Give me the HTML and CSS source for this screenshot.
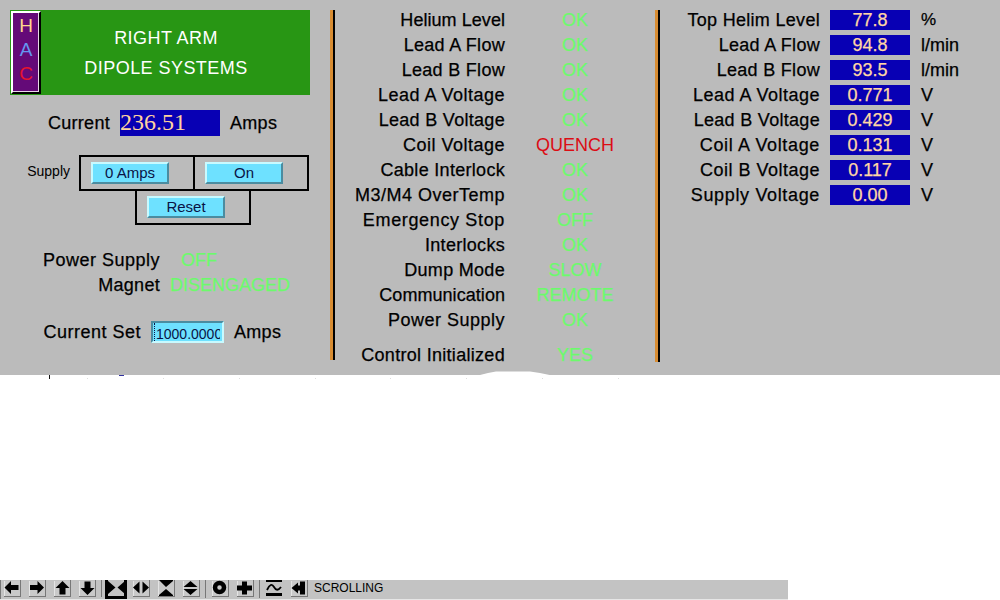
FILE: index.html
```
<!DOCTYPE html>
<html lang="en">

<head>
    <meta charset="UTF-8">
    <title>Right Arm Dipole Systems</title>
    <link rel="stylesheet" href="styles.css">
</head>

<body>
    <div class="console">
        <div class="left">
            <div class="header">
                <div class="hac">
                    <span class="h">H</span>
                    <span class="a">A</span>
                    <span class="c">C</span>
                </div>
                <div class="title">RIGHT ARM<br>DIPOLE SYSTEMS</div>
            </div>
            <div class="current">
                <span class="name">Current</span>
                <span class="readout">236.51</span>
                <span class="amps">Amps</span>
            </div>
            <div class="supply">
                <span class="supply-name">Supply</span>
                <div class="supply-box">
                    <div class="cell"><button>0 Amps</button></div>
                    <div class="cell cell-on"><button>On</button></div>
                </div>
            </div>
            <div class="reset-box"><button>Reset</button></div>
            <div class="state">
                <span class="name wide">Power Supply</span><span class="ok off">OFF</span>
                <span class="name">Magnet</span><span class="ok">DISENGAGED</span>
            </div>
            <div class="setpoint">
                <span class="name wide">Current Set</span>
                <div class="field"><span>1000.0000</span></div>
                <span class="amps">Amps</span>
            </div>
        </div>

        <div class="divider"></div>

        <div class="status">
            <span class="name tight">Helium Level</span><span class="ok">OK</span>
            <span class="name">Lead A Flow</span><span class="ok">OK</span>
            <span class="name">Lead B Flow</span><span class="ok">OK</span>
            <span class="name wide">Lead A Voltage</span><span class="ok">OK</span>
            <span class="name">Lead B Voltage</span><span class="ok">OK</span>
            <span class="name wide">Coil Voltage</span><span class="bad">QUENCH</span>
            <span class="name">Cable Interlock</span><span class="ok">OK</span>
            <span class="name wide">M3/M4 OverTemp</span><span class="ok">OK</span>
            <span class="name wider">Emergency Stop</span><span class="ok">OFF</span>
            <span class="name">Interlocks</span><span class="ok">OK</span>
            <span class="name">Dump Mode</span><span class="ok">SLOW</span>
            <span class="name tight">Communication</span><span class="ok">REMOTE</span>
            <span class="name wide">Power Supply</span><span class="ok">OK</span>
            <span class="name last">Control Initialized</span><span class="ok last">YES</span>
        </div>

        <div class="divider second"></div>

        <div class="values">
            <span class="name">Top Helim Level</span><span class="val">77.8</span><span class="unit percent">%</span>
            <span class="name">Lead A Flow</span><span class="val">94.8</span><span class="unit">l/min</span>
            <span class="name">Lead B Flow</span><span class="val">93.5</span><span class="unit">l/min</span>
            <span class="name wide">Lead A Voltage</span><span class="val">0.771</span><span class="unit">V</span>
            <span class="name">Lead B Voltage</span><span class="val">0.429</span><span class="unit">V</span>
            <span class="name wider">Coil A Voltage</span><span class="val">0.131</span><span class="unit">V</span>
            <span class="name wide">Coil B Voltage</span><span class="val">0.117</span><span class="unit">V</span>
            <span class="name wider">Supply Voltage</span><span class="val">0.00</span><span class="unit">V</span>
        </div>

        <svg class="edge" width="1000" height="9" viewBox="0 0 1000 9">
            <path fill="#fff" d="M478 4.5L488 2L496 .5H530L540 2L552 4.5Z"/>
            <path fill="#111" d="M49 4h1v4h-1z"/>
            <path fill="#3030a0" d="M119 4h5v1h-5z"/>
            <path fill="#ddd" d="M87 7h1v1h-1zM163 7h1v1h-1zM239 7h1v1h-1zM315 7h1v1h-1zM390 7h1v1h-1zM466 7h1v1h-1zM542 7h1v1h-1zM618 7h1v1h-1z"/>
        </svg>
    </div>

    <!-- scroll / zoom tools -->
    <div class="toolbar">
        <svg class="tools" width="310" height="20" viewBox="0 0 310 20" shape-rendering="crispEdges">
            <!-- raised button edges -->
            <path fill="#c9c9c9" d="M4 1h16v15H4zM29 1h16v15H29zM54 1h16v15H54zM79 1h16v15H79zM133 1h16v15h-16zM158 1h16v15h-16zM183 1h16v15h-16zM212 1h16v15h-16zM237 1h16v15h-16zM291 1h16v15h-16z"/>
            <path fill="none" stroke="#e4e4e4" d="M4.500 16V.5M29.500 16V.5M54.500 16V.5M79.500 16V.5M133.500 16V.5M158.500 16V.5M183.500 16V.5M212.500 16V.5M237.500 16V.5M291.500 16V.5"/>
            <path fill="none" stroke="#777" d="M4 16.500h16.500V0M29 16.500h16.500V0M54 16.500h16.500V0M79 16.500h16.500V0M133 16.500h16.500V0M158 16.500h16.500V0M183 16.500h16.500V0M212 16.500h16.500V0M237 16.500h16.500V0M291 16.500h16.500V0"/>
            <path stroke="#777" d="M.5 0v19M101.500 0v17M205.500 0v18M259.500 0v18"/>
            <g shape-rendering="auto">
                <path d="M4.500 7.500L11 1V5H18.500V10H11V14Z"/>
                <path d="M44 7.500L37.500 1V5H30V10H37.500V14Z"/>
                <path d="M62.500 1L69.500 8H65.500V14.500H59.500V8H55.500Z"/>
                <path d="M87.500 15L94.500 8H90.500V1.500H84.500V8H80.500Z"/>
                <path fill="none" stroke="#000" stroke-width="3" d="M106.500 0V17.500H125.500V0"/>
                <path d="M108 1L115.500 7.500L108 14ZM125 1L117.500 7.500L125 14Z"/>
                <path d="M133 7.500L139.500 1.500V13.500ZM149 7.500L142.500 1.500V13.500Z"/>
                <path d="M159 0H173V1L166 7ZM159 16V15L166 9L173 15V16Z"/>
                <path d="M190.500 1L197.500 7H183.500ZM190.500 15L197.500 9H183.500Z"/>
                <circle cx="219.500" cy="7.500" r="4.500" fill="none" stroke="#000" stroke-width="4.500"/>
                <path d="M242 1.500h5v4h5v5h-5v4h-5v-4h-5v-5h5z"/>
                <path d="M266 0h16v2h-16zM266 13h16v3h-16z"/>
                <path fill="none" stroke="#000" stroke-width="1.800" d="M267 10Q271 1.500 274 7T281 7"/>
                <path d="M291.500 8L298 2.500V5.500H300V1.500H305V14.500H300V10.500H298V13.500Z"/>
            </g>
        </svg>
        <span class="mode">SCROLLING</span>
    </div>
</body>

</html>
```
FILE: styles.css
```
* {
    box-sizing: border-box;
}

body {
    margin: 0;
    height: 600px;
    overflow: hidden;
    display: flex;
    flex-direction: column;
    justify-content: space-between;
    background: #fff;
    color: #000;
    font-family: "Liberation Sans", Arial, sans-serif;
    font-size: 18px;
    line-height: 20px;
}

.console {
    position: relative;
    display: flex;
    height: 375px;
    padding-top: 10px;
    background: #bbb;
}

.name,
.amps {
    letter-spacing: 0.3px;
    white-space: nowrap;
}

.name,
.amps,
.unit,
.ok,
.val {
    -webkit-text-stroke: 0.25px currentColor;
}

.tight {
    letter-spacing: 0.05px;
}

.wide {
    letter-spacing: 0.5px;
}

.wider {
    letter-spacing: 0.65px;
}

.ok {
    color: #6cfa6c;
}

.bad {
    color: #dc0c14;
}

/* left column */
.left {
    width: 330px;
    padding-left: 10px;
}

.header {
    display: flex;
    width: 300px;
    height: 85px;
    padding: 1px;
    background: #289614;
}

/* purple plate, light on top left, black shadow */
.hac {
    display: flex;
    flex-direction: column;
    width: 30px;
    height: 83px;
    padding-top: 1px;
    border: 2px solid #000;
    border-top-color: #fff;
    border-left-color: #fff;
    background: #640a78;
    box-shadow: inset -1px -1px #e8d8e8;
    text-align: center;
    font-size: 19px;
    line-height: 24px;
}

.h { color: #ffd78c; }
.a { color: #6496f0; }
.c { color: #e6142d; }

.title {
    flex: 1;
    padding: 12px 18px 0 0;
    color: #fff;
    text-align: center;
    letter-spacing: 0.45px;
    line-height: 30px;
}

.current {
    display: grid;
    grid-template-columns: 100px 100px 60px;
    column-gap: 10px;
    margin-top: 15px;
    line-height: 26px;
}

.current .name,
.setpoint .name {
    text-align: right;
}

.readout {
    height: 26px;
    background: #0800b4;
    color: #ffd2a0;
    font-family: "Liberation Serif", "Times New Roman", serif;
    font-size: 24px;
    line-height: 25px;
}

.supply {
    display: flex;
    margin-top: 19px;
}

.supply-name {
    width: 69px;
    padding: 6px 9px 0 0;
    text-align: right;
    font-size: 14px;
}

.supply-box {
    display: flex;
    width: 230px;
    height: 36px;
    border: 2px solid #000;
}

.cell {
    width: 114px;
    padding: 5px 0 0 10px;
}

.cell-on {
    border-left: 2px solid #000;
    margin-left: -2px;
}

button {
    display: block;
    width: 78px;
    height: 22px;
    padding: 0;
    border: 2px solid;
    border-color: #c8faff #4b8ca0 #4b8ca0 #c8faff;
    background: #6ee1ff;
    color: #0a1446;
    font: 15px/18px "Liberation Sans", Arial, sans-serif;
}

.reset-box {
    width: 116px;
    height: 36px;
    margin: -2px 0 0 125px;
    padding: 5px 0 0 10px;
    border: 2px solid #000;
}

.state {
    display: grid;
    grid-template-columns: 150px 130px;
    column-gap: 10px;
    row-gap: 5px;
    margin-top: 25px;
}

.state .name {
    text-align: right;
}

.off {
    padding-left: 11px;
}

.setpoint {
    display: grid;
    grid-template-columns: 131px 73px 60px;
    column-gap: 10px;
    margin-top: 26px;
    line-height: 22px;
}

.field {
    height: 22px;
    padding-left: 1px;
    border: 2px solid;
    border-color: #4b8ca0 #c8faff #c8faff #4b8ca0;
    background: #6ee1ff;
    color: #0a1446;
    font-size: 14px;
    line-height: 23px;
}

/* the entry is narrower than its number */
.field span {
    display: block;
    width: 66px;
    overflow: hidden;
    height: 18px;
    padding-left: 1px;
    border-left: 1px dotted #0a1446;
}

/* orange line with black shadow */
.divider {
    width: 5px;
    height: 350px;
    border-left: 3px solid #d78c32;
    background: #000;
}

.second {
    height: 352px;
}

.status {
    display: grid;
    grid-template-columns: 170px 120px;
    grid-auto-rows: 20px;
    column-gap: 10px;
    row-gap: 5px;
    width: 320px;
    text-align: center;
}

.status .name,
.values .name {
    text-align: right;
}

.status .last {
    margin-top: 10px;
}

.values {
    display: grid;
    grid-template-columns: 160px 80px 60px;
    grid-auto-rows: 20px;
    column-gap: 10px;
    row-gap: 5px;
}

.val {
    background: #0800b4;
    color: #ffd7a5;
    text-align: center;
}

.unit {
    padding-left: 1px;
}

.percent {
    font-size: 17px;
}

/* bits of the plot showing along the bottom edge */
.edge {
    position: absolute;
    left: 0;
    top: 371px;
}

.toolbar {
    display: flex;
    width: 788px;
    height: 20px;
    background: #c3c3c3;
    border-bottom: 1px solid #e6e6e6;
}

.mode {
    padding-left: 4px;
    font-size: 12px;
    line-height: 16px;
}
```
